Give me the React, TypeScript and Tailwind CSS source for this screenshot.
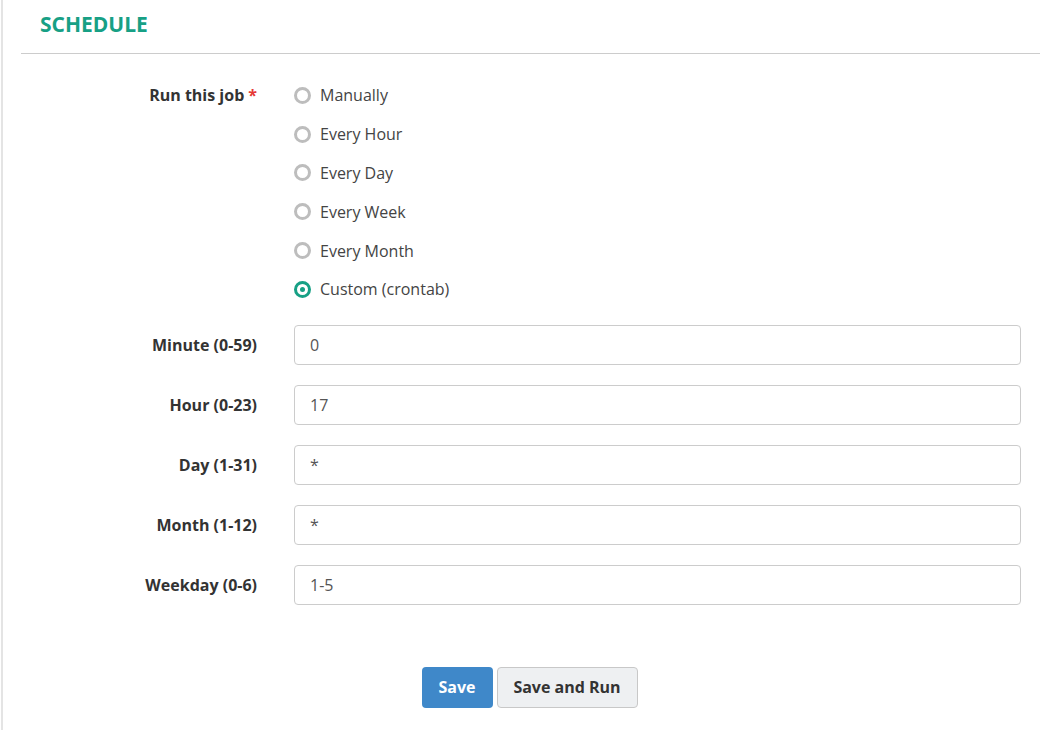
const options = [
  { label: "Manually", checked: false },
  { label: "Every Hour", checked: false },
  { label: "Every Day", checked: false },
  { label: "Every Week", checked: false },
  { label: "Every Month", checked: false },
  { label: "Custom (crontab)", checked: true },
];

const fields = [
  { label: "Minute (0-59)", value: "0" },
  { label: "Hour (0-23)", value: "17" },
  { label: "Day (1-31)", value: "*" },
  { label: "Month (1-12)", value: "*" },
  { label: "Weekday (0-6)", value: "1-5" },
];

function Radio({ checked }: { checked: boolean }) {
  return checked ? (
    <span className="flex h-[17px] w-[17px] items-center justify-center rounded-full border-[3px] border-[#17a085]">
      <span className="h-[5px] w-[5px] rounded-full bg-[#17a085]" />
    </span>
  ) : (
    <span className="h-[17px] w-[17px] rounded-full border-[3px] border-[#bdbdbd] bg-white" />
  );
}

export default function App() {
  return (
    <div
      className="min-h-screen ml-px border-l-2 border-[#e4e4e4] bg-white"
      style={{ fontFamily: '"Open Sans", "Noto Sans", sans-serif' }}
    >
      <div className="ml-[18px] w-[1019px]">
        {/* Header */}
        <div className="h-[54px] border-b border-[#cccccc] pl-[19px] pt-[10px]">
          <h2 className="text-[21px] leading-[28px] font-bold text-[#17a085]">
            SCHEDULE
          </h2>
        </div>

        {/* Run this job */}
        <div className="flex pt-[21px]">
          <div className="w-[236px] h-[39px] flex items-center justify-end text-[16px] font-bold text-[#333]">
            Run this job <span className="ml-1 text-[#e53935]">*</span>
          </div>
          <div className="ml-[37px] mt-px flex flex-col">
            {options.map((o) => (
              <label key={o.label} className="flex h-[38.8px] items-center gap-[9px] text-[16px] text-[#444]">
                <Radio checked={o.checked} />
                <span>{o.label}</span>
              </label>
            ))}
          </div>
        </div>

        {/* Crontab fields */}
        <div className="mt-[16px] flex flex-col gap-5">
          {fields.map((f) => (
            <div key={f.label} className="flex items-center">
              <div className="w-[236px] text-right text-[16px] font-bold text-[#333]">{f.label}</div>
              <div className="ml-[37px] flex h-[40px] w-[727px] items-center rounded-[4px] border border-[#cccccc] px-[15px] text-[16px] text-[#555]">
                {f.value}
              </div>
            </div>
          ))}
        </div>

        {/* Actions */}
        <div className="mt-[62px] flex justify-center gap-1 pr-[2px]">
          <button className="h-[41px] w-[71px] rounded-[4px] bg-[#3f88c9] text-[16px] font-bold text-white">
            Save
          </button>
          <button className="h-[41px] w-[141px] rounded-[4px] border border-[#c8c8c8] bg-[#eef0f2] text-[16px] font-bold text-[#333]">
            Save and Run
          </button>
        </div>
      </div>
    </div>
  );
}
